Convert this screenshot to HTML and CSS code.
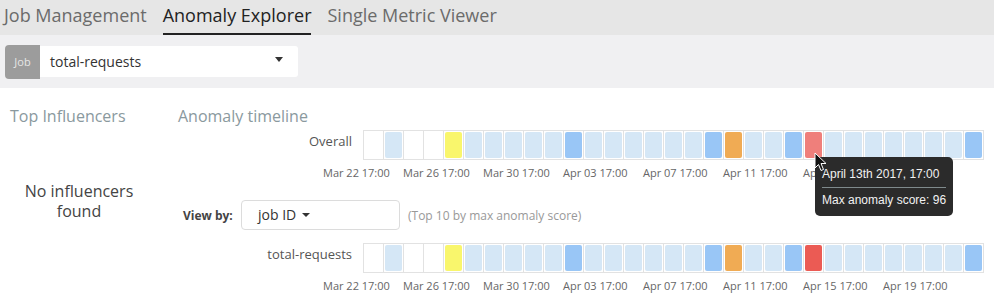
FILE: index.html
```html
<!DOCTYPE html>
<html>
<head>
    <title>Anomaly Explorer</title>
    <link rel="stylesheet" href="styles.css">
</head>
<body>
    <!-- Top navigation -->
    <div class="tabs">
        <span class="tab">Job Management</span>
        <span class="tab active">Anomaly Explorer</span>
        <span class="tab">Single Metric Viewer</span>
    </div>

    <!-- Job picker -->
    <div class="toolbar">
        <div class="job-select">
            <span class="job-label">Job</span>
            <span class="job-value">total-requests<span class="caret"></span></span>
        </div>
    </div>

    <div class="explorer">
        <div class="influencers">
            <h3 class="section-title">Top Influencers</h3>
            <div class="empty">No influencers found</div>
        </div>

        <div class="timeline">
            <h3 class="section-title">Anomaly timeline</h3>

            <div class="lane">
                <div class="lane-label">Overall</div>
                <div class="cells" id="overall"></div>
            </div>
            <div class="axis">
                <span>Mar 22 17:00</span><span>Mar 26 17:00</span><span>Mar 30 17:00</span><span>Apr 03 17:00</span>
                <span>Apr 07 17:00</span><span>Apr 11 17:00</span><span>Apr 15 17:00</span><span>Apr 19 17:00</span>
            </div>

            <div class="view-by">
                <span class="view-label">View by:</span>
                <span class="view-select">job ID<span class="caret small"></span></span>
                <span class="view-note">(Top 10 by max anomaly score)</span>
            </div>

            <div class="lane lane-job">
                <div class="lane-label">total-requests</div>
                <div class="cells" id="job"></div>
            </div>
            <div class="axis">
                <span>Mar 22 17:00</span><span>Mar 26 17:00</span><span>Mar 30 17:00</span><span>Apr 03 17:00</span>
                <span>Apr 07 17:00</span><span>Apr 11 17:00</span><span>Apr 15 17:00</span><span>Apr 19 17:00</span>
            </div>
        </div>
    </div>

    <!-- Hover tooltip -->
    <svg class="cursor" width="13" height="20" viewBox="0 0 13 20">
        <path d="M1 1 L1 16 L4.5 12.5 L7 18.5 L9.5 17.5 L7 11.5 L12 11.5 Z" fill="#111" stroke="#fff" stroke-width="1"/>
    </svg>
    <div class="tooltip">
        <div class="tip-line">April 13th 2017, 17:00</div>
        <div class="tip-sep"></div>
        <div class="tip-line">Max anomaly score: 96</div>
    </div>

    <script>
        // severity per day: n = none, l = low, w = warning, y = minor, o = major, r = critical
        var days = 'nlnnylllllwllllllwollwrlllllllw';

        function fill(id, hover) {
            var row = document.getElementById(id);
            for (var i = 0; i < days.length; i++) {
                var cell = document.createElement('div');
                cell.className = 'cell';
                if (days[i] !== 'n') {
                    var s = document.createElement('span');
                    s.className = 'sev sev-' + days[i];
                    if (hover && days[i] === 'r') s.className += ' hover';
                    cell.appendChild(s);
                }
                row.appendChild(cell);
            }
        }

        fill('overall', true);
        fill('job', false);
    </script>
</body>
</html>
```

FILE: styles.css
```css
body {
    margin: 0;
    font-family: 'Open Sans', sans-serif;
    color: #333;
    background: #FFFFFF;
    position: relative;
}

.tabs {
    display: flex;
    gap: 16px;
    height: 35px;
    padding-left: 4px;
    background: #e6e6e6;
}

.tab {
    font-size: 18px;
    line-height: 26px;
    padding: 2px 0 4px;
    color: #6b6b6b;
    border-bottom: 2px solid transparent;
}

.tab.active {
    color: #222;
    border-bottom-color: #222;
}

.toolbar {
    background: #f0f0f2;
    padding: 10px 5px 9px;
}

.job-select {
    display: flex;
    width: 293px;
    height: 34px;
}

.job-label {
    width: 35px;
    background: #9c9c9c;
    color: #e6e6e6;
    font-size: 11px;
    line-height: 34px;
    text-align: center;
    border-radius: 4px 0 0 4px;
}

.job-value {
    flex: 1;
    display: flex;
    align-items: center;
    justify-content: space-between;
    background: #FFFFFF;
    margin: 1px 0 2px;
    padding: 0 15px 0 10px;
    font-size: 14px;
    color: #333;
    border-radius: 0 3px 3px 0;
}

.caret {
    width: 0;
    height: 0;
    border-left: 4px solid transparent;
    border-right: 4px solid transparent;
    border-top: 5px solid #333;
    margin-top: -4px;
}

.caret.small {
    display: inline-block;
    border-top-width: 4px;
    margin: 0 0 2px 6px;
    vertical-align: middle;
}

.explorer {
    display: flex;
}

.section-title {
    margin: 16px 0 0;
    font-size: 16px;
    line-height: 24px;
    font-weight: normal;
    color: #8a999e;
}

.influencers {
    width: 138px;
    padding: 0 30px 0 10px;
}

.empty {
    margin-top: 53px;
    font-size: 16px;
    line-height: 20px;
    color: #444;
    text-align: center;
}

.timeline {
    flex: 1;
}

.lane {
    display: flex;
    align-items: center;
    margin-top: 2px;
}

.lane-job {
    margin-top: 13px;
}

.lane-label {
    width: 174px;
    margin: -8px 11px 0 0;
    text-align: right;
    font-size: 13px;
    color: #555;
}

.cells {
    display: flex;
    border-right: 1px solid #e2e2e2;
}

.cell {
    width: 17px;
    height: 26px;
    padding: 1px;
    border: 1px solid #e2e2e2;
    border-right: none;
}

.sev {
    display: block;
    height: 100%;
    border-radius: 2px;
}

.sev-l { background: #d5e7f6; }
.sev-w { background: #99c6f6; }
.sev-y { background: #f9f66c; }
.sev-o { background: #f0ab54; }
.sev-r { background: #eb5b54; }
.sev-r.hover { background: #ef7f7b; }

.axis {
    display: flex;
    margin-top: 5px;
    padding-left: 145px;
    font-size: 11px;
    line-height: 16px;
    color: #666;
}

.axis span {
    width: 80px;
    flex: none;
}

.view-by {
    display: flex;
    align-items: center;
    margin-top: 19px;
    padding-left: 5px;
}

.view-label {
    font-size: 12px;
    font-weight: bold;
    color: #444;
    width: 58px;
}

.view-select {
    width: 141px;
    height: 28px;
    line-height: 28px;
    padding-left: 16px;
    border: 1px solid #dcdcdc;
    border-radius: 4px;
    font-size: 14px;
    color: #333;
}

.view-note {
    margin-left: 8px;
    font-size: 12px;
    color: #999;
}

.tooltip {
    position: absolute;
    left: 815px;
    top: 157px;
    width: 124px;
    padding: 8px 7px 7px;
    background: #2b2b2b;
    border-radius: 5px;
    font-family: 'Liberation Sans', Arial, sans-serif;
    font-size: 12px;
    color: #f2f2f2;
    white-space: nowrap;
}

.tip-line {
    line-height: 18px;
}

.tip-sep {
    height: 1px;
    background: #7f8a8c;
    margin: 4px 0 3px;
}

.cursor {
    position: absolute;
    left: 814px;
    top: 152px;
    z-index: 2;
}
```
